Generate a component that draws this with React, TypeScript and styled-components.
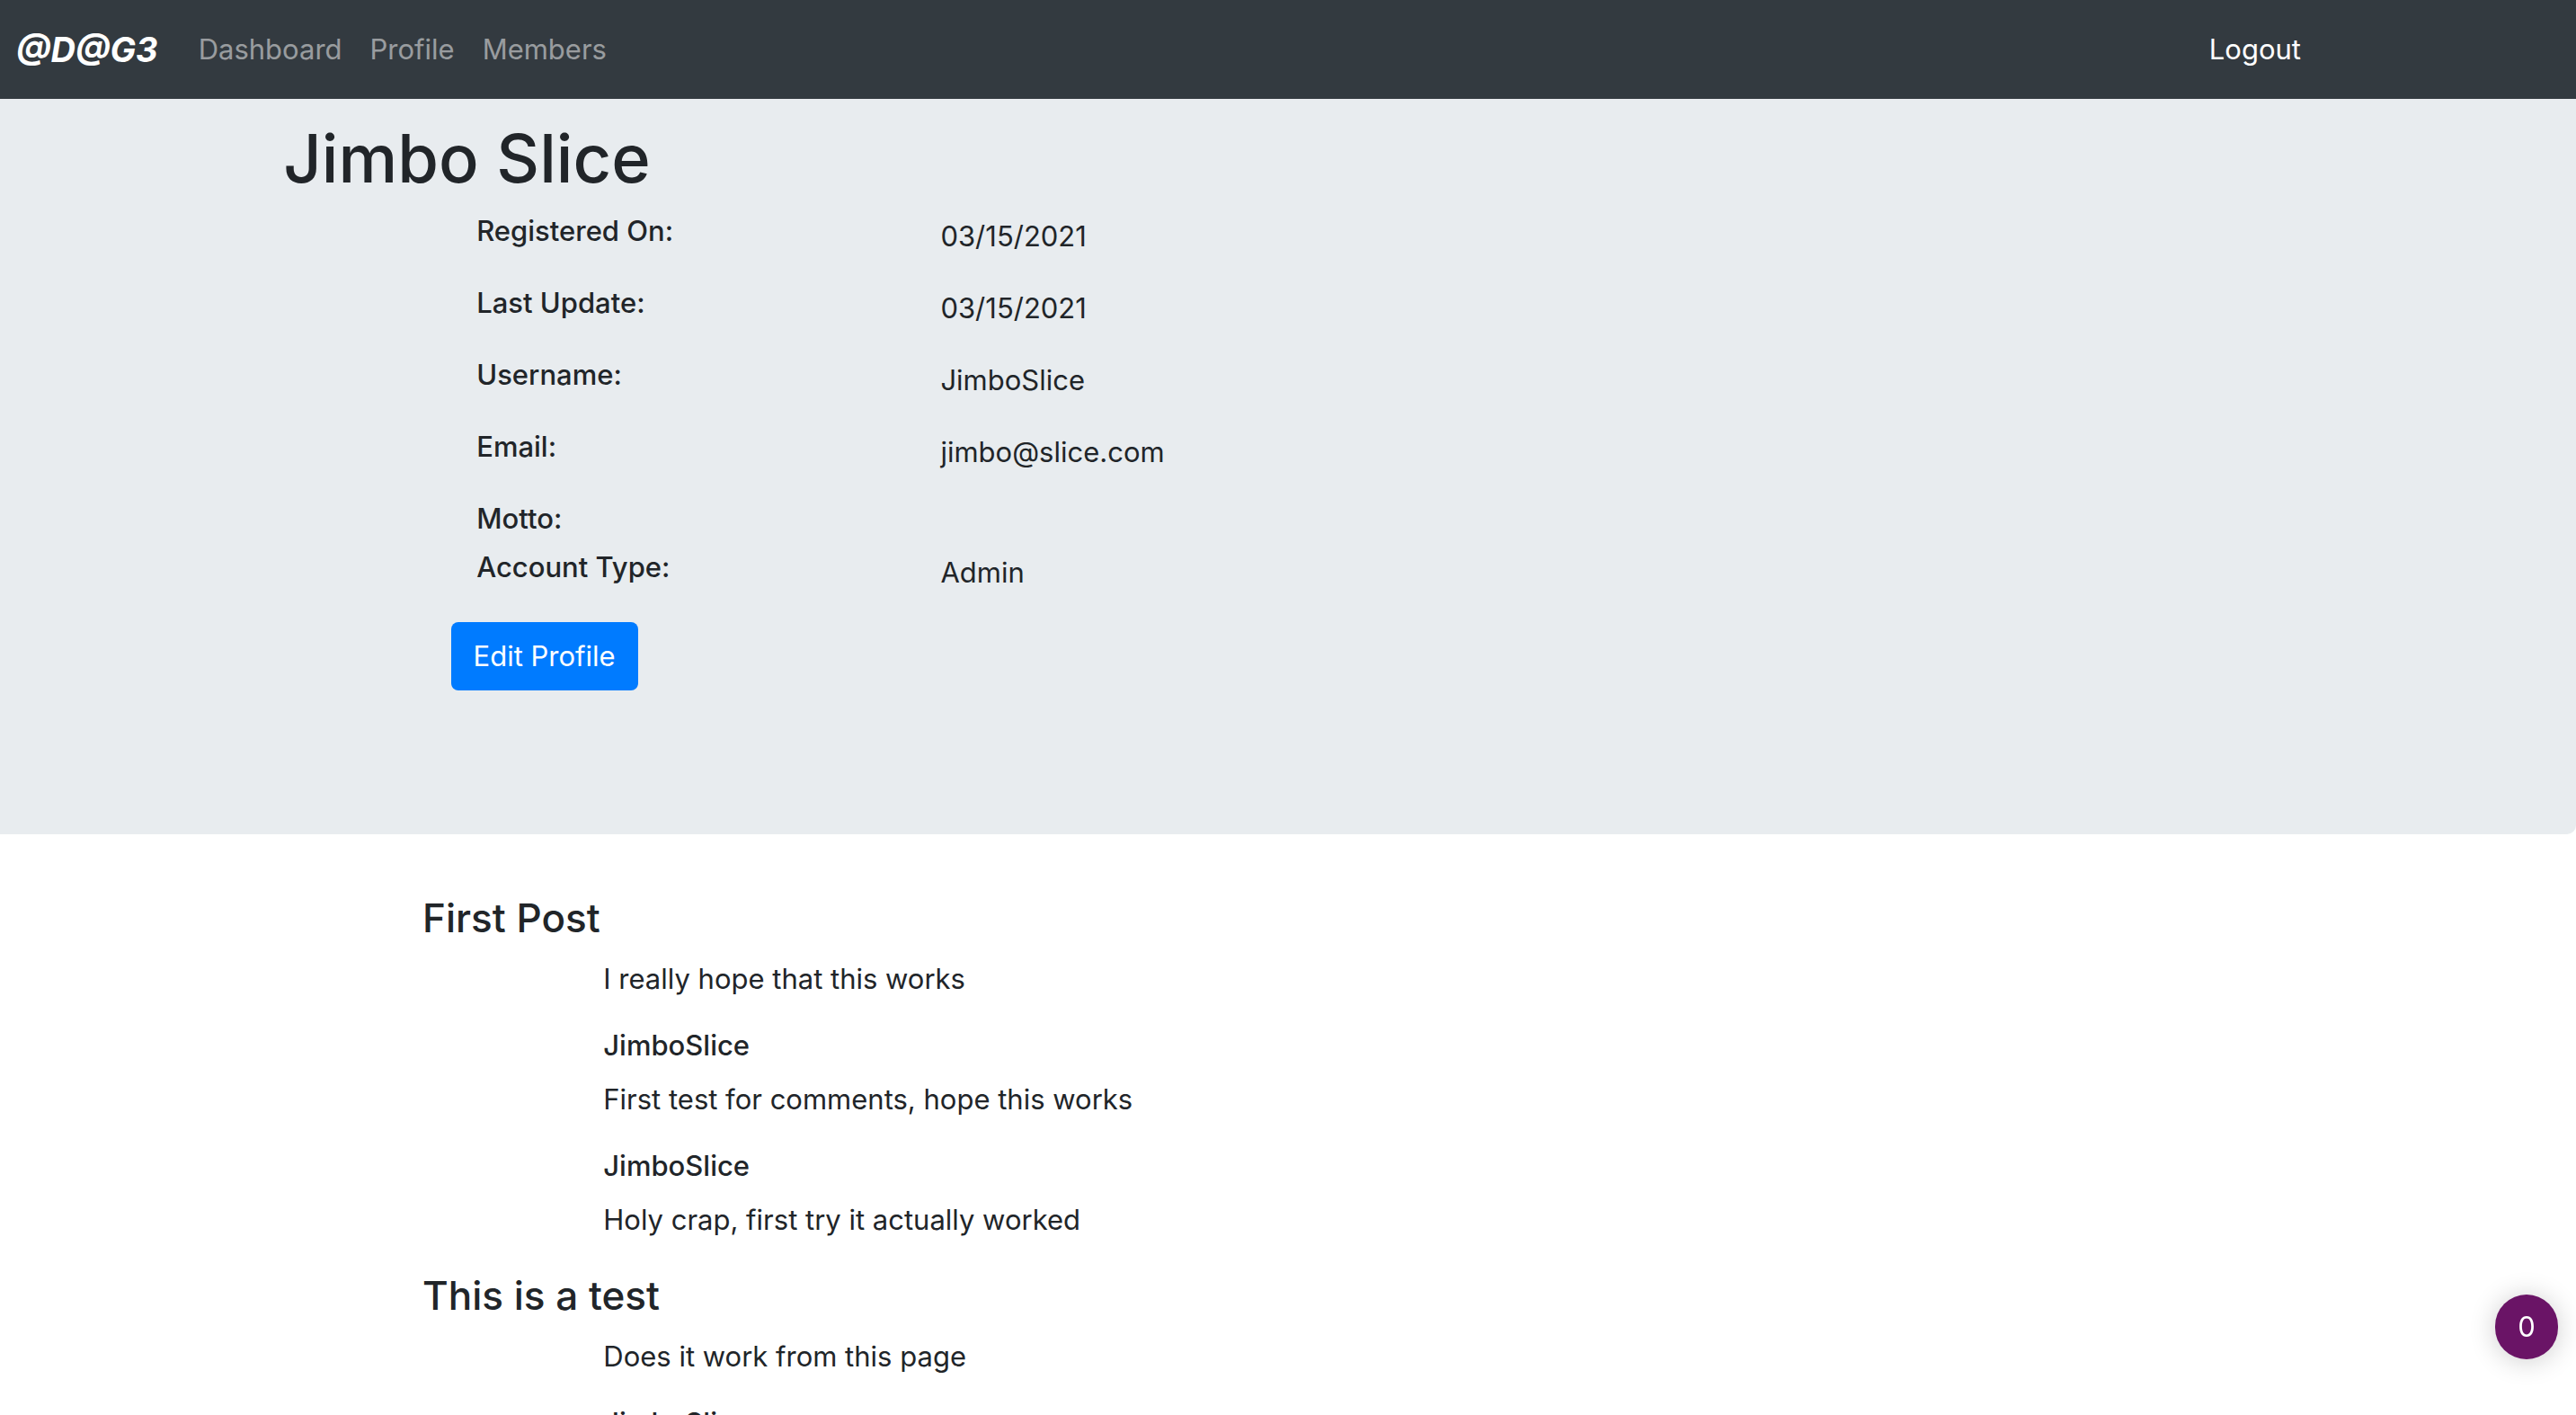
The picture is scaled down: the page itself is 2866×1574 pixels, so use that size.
import React from "react";
import styled, { createGlobalStyle } from "styled-components";

const GlobalStyle = createGlobalStyle`
  *, *::before, *::after { box-sizing: border-box; }
  body {
    margin: 0;
    background: #fff;
    color: #212529;
    font-family: Inter, "Liberation Sans", sans-serif;
    font-size: 31px;
    line-height: 48px;
  }
  h1, h2, h3, p, dl, dd { margin: 0; }
`;

const Page = styled.div`
  min-height: 100vh;
`;

const Navbar = styled.nav`
  display: flex;
  align-items: center;
  height: 110px;
  padding: 0 306px 0 18px;
  background: #333a40;
`;

const Brand = styled.a`
  margin-right: 45px;
  color: #fff;
  font-size: 38px;
  font-weight: 700;
  font-style: italic;
  text-decoration: none;
`;

const NavLinks = styled.div`
  display: flex;
  flex: 1;
  gap: 31px;
`;

const NavLink = styled.a<{ $bright?: boolean }>`
  color: ${(p) => (p.$bright ? "#fff" : "rgba(255, 255, 255, 0.5)")};
  text-decoration: none;
`;

const Jumbotron = styled.header`
  padding: 18px 0 160px;
  background: #e8ecef;
  border-radius: 0 0 10px 0;
`;

const UserName = styled.h1`
  padding-left: 11%;
  font-size: 74px;
  font-weight: 500;
  line-height: 96px;
`;

const Details = styled.dl`
  padding: 9px 0 5px 18.5%;
`;

const DetailRow = styled.div`
  display: flex;
  align-items: flex-start;
`;

const DetailLabel = styled.dt`
  width: 22.1%;
  padding-bottom: 6px;
  font-weight: 500;
`;

const DetailValue = styled.dd`
  padding-top: 6px;

  &:not(:empty) {
    padding-bottom: 26px;
  }
`;

const EditButton = styled.button`
  display: block;
  height: 76px;
  margin-left: 17.5%;
  padding: 0 25px;
  border: 0;
  border-radius: 8px;
  background: #007bff;
  color: #fff;
  font: inherit;
`;

const Posts = styled.main`
  padding: 64px 0 0 16.4%;
`;

const Post = styled.article`
  padding-bottom: 31px;
`;

const PostTitle = styled.h2`
  padding-bottom: 15px;
  font-size: 44px;
  font-weight: 500;
  line-height: 58px;
`;

const PostBody = styled.div`
  padding-left: 8.4%;
`;

const Comment = styled.section`
  padding-top: 26px;
`;

const Author = styled.h3`
  padding-bottom: 12px;
  font-size: 31px;
  font-weight: 500;
`;

const Counter = styled.button`
  position: fixed;
  right: 20px;
  bottom: 62px;
  width: 70px;
  height: 72px;
  padding: 0;
  border: 0;
  border-radius: 36px;
  background: #6a1466;
  box-shadow: 0 2px 30px rgba(0, 0, 0, 0.2);
  color: #fff;
  font: inherit;
`;

const details = [
  { label: "Registered On:", value: "03/15/2021" },
  { label: "Last Update:", value: "03/15/2021" },
  { label: "Username:", value: "JimboSlice" },
  { label: "Email:", value: "jimbo@slice.com" },
  { label: "Motto:", value: "" },
  { label: "Account Type:", value: "Admin" },
];

const posts = [
  {
    title: "First Post",
    text: "I really hope that this works",
    comments: [
      { author: "JimboSlice", text: "First test for comments, hope this works" },
      { author: "JimboSlice", text: "Holy crap, first try it actually worked" },
    ],
  },
  {
    title: "This is a test",
    text: "Does it work from this page",
    comments: [{ author: "JimboSlice", text: "" }],
  },
];

export default function App() {
  return (
    <Page>
      <GlobalStyle />
      <Navbar>
        <Brand href="#">@D@G3</Brand>
        <NavLinks>
          <NavLink href="#dashboard">Dashboard</NavLink>
          <NavLink href="#profile">Profile</NavLink>
          <NavLink href="#members">Members</NavLink>
        </NavLinks>
        <NavLink $bright href="#logout">Logout</NavLink>
      </Navbar>
      <Jumbotron>
        <UserName>Jimbo Slice</UserName>
        <Details>
          {details.map((d) => (
            <DetailRow key={d.label}>
              <DetailLabel>{d.label}</DetailLabel>
              <DetailValue>{d.value}</DetailValue>
            </DetailRow>
          ))}
        </Details>
        <EditButton type="button">Edit Profile</EditButton>
      </Jumbotron>
      <Posts>
        {posts.map((post) => (
          <Post key={post.title}>
            <PostTitle>{post.title}</PostTitle>
            <PostBody>
              <p>{post.text}</p>
              {post.comments.map((c, i) => (
                <Comment key={i}>
                  <Author>{c.author}</Author>
                  <p>{c.text}</p>
                </Comment>
              ))}
            </PostBody>
          </Post>
        ))}
      </Posts>
      <Counter type="button">0</Counter>
    </Page>
  );
}
